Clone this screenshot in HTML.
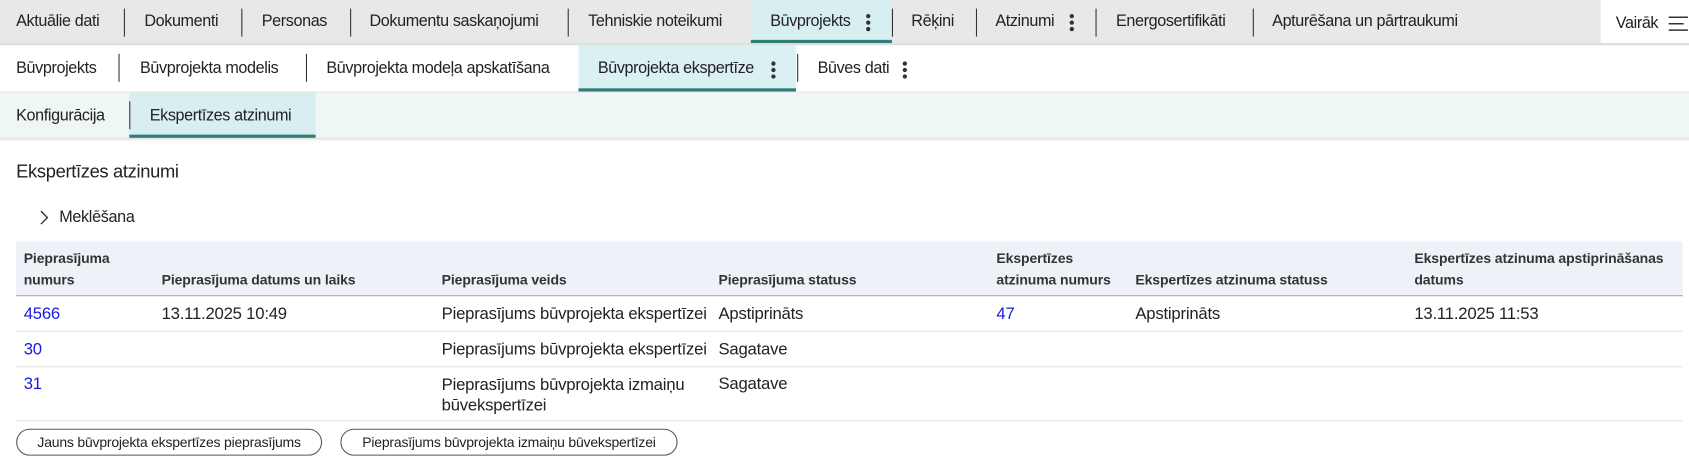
<!DOCTYPE html>
<html><head><meta charset="utf-8"><style>
*{margin:0;padding:0;box-sizing:border-box}
body{width:1689px;height:473px;background:#fff;font-family:"Liberation Sans",sans-serif;color:#222;position:relative;overflow:hidden}
#w{position:absolute;left:0;top:0;width:1568px;height:440px;transform:scale(1.0772);transform-origin:0 0}
.a{position:absolute;white-space:nowrap}
.t{font-size:15px;letter-spacing:-0.35px;color:#222}
.sep{position:absolute;width:1px;background:#333}
.dots{position:absolute;width:4px}
.dots i{display:block;width:4px;height:4px;border-radius:50%;background:#333;margin-bottom:2px}
.h{font-size:13px;font-weight:bold;letter-spacing:-0.1px;line-height:20px;color:#333}
.c{font-size:15.5px;letter-spacing:-0.2px;color:#222}
.l{color:#1a1adc}
.hr{position:absolute;left:15px;width:1547px;height:1px;background:#e4e4e4}
.btn{position:absolute;top:398px;height:25px;border:1px solid #555;border-radius:13px;font-size:13px;letter-spacing:-0.2px;line-height:23px;text-align:center;color:#222}
</style></head><body><div id="w">
<div class="a" style="left:0;top:0;width:1486px;height:40px;background:#e8e8e8"></div>
<div class="a" style="left:697px;top:0;width:131px;height:40px;background:#d8eff1;border-bottom:3px solid #2f7d75"></div>
<div class="a" style="left:0;top:40px;width:1568px;height:2px;background:#ddd"></div>
<div class="a t" style="left:15px;top:11px">Aktuālie dati</div>
<div class="sep" style="left:115px;top:8px;height:26px"></div>
<div class="a t" style="left:134px;top:11px">Dokumenti</div>
<div class="sep" style="left:224px;top:8px;height:26px"></div>
<div class="a t" style="left:243px;top:11px">Personas</div>
<div class="sep" style="left:325px;top:8px;height:26px"></div>
<div class="a t" style="left:343px;top:11px">Dokumentu saskaņojumi</div>
<div class="sep" style="left:527px;top:8px;height:26px"></div>
<div class="a t" style="left:546px;top:11px">Tehniskie noteikumi</div>
<div class="a t" style="left:715px;top:11px">Būvprojekts</div>
<div class="dots" style="left:804px;top:13px"><i></i><i></i><i></i></div>
<div class="sep" style="left:828px;top:8px;height:26px"></div>
<div class="a t" style="left:846px;top:11px">Rēķini</div>
<div class="sep" style="left:906px;top:8px;height:26px"></div>
<div class="a t" style="left:924px;top:11px">Atzinumi</div>
<div class="dots" style="left:993px;top:13px"><i></i><i></i><i></i></div>
<div class="sep" style="left:1017px;top:8px;height:26px"></div>
<div class="a t" style="left:1036px;top:11px">Energosertifikāti</div>
<div class="sep" style="left:1163px;top:8px;height:26px"></div>
<div class="a t" style="left:1181px;top:11px">Apturēšana un pārtraukumi</div>
<div class="a t" style="left:1500px;top:13px">Vairāk</div>
<svg class="a" style="left:1549px;top:14px" width="20" height="16"><path d="M0 2H18M0 8H14M0 14H18" stroke="#333" stroke-width="1.4"/></svg>
<div class="a" style="left:537px;top:42px;width:202px;height:43px;background:#daf0f2;border-bottom:3px solid #2f7d75"></div>
<div class="a t" style="left:15px;top:55px">Būvprojekts</div>
<div class="sep" style="left:110px;top:50px;height:26px"></div>
<div class="a t" style="left:130px;top:55px">Būvprojekta modelis</div>
<div class="sep" style="left:284px;top:50px;height:26px"></div>
<div class="a t" style="left:303px;top:55px">Būvprojekta modeļa apskatīšana</div>
<div class="a t" style="left:555px;top:55px">Būvprojekta ekspertīze</div>
<div class="dots" style="left:716px;top:57px"><i></i><i></i><i></i></div>
<div class="sep" style="left:740px;top:50px;height:26px"></div>
<div class="a t" style="left:759px;top:55px">Būves dati</div>
<div class="dots" style="left:838px;top:57px"><i></i><i></i><i></i></div>
<div class="a" style="left:0;top:85px;width:1568px;height:1px;background:#e2e2e2"></div>
<div class="a" style="left:0;top:86px;width:1568px;height:42px;background:#eef6f6"></div>
<div class="a" style="left:120px;top:86px;width:173px;height:42px;background:#d8eef0;border-bottom:3px solid #2f7d75"></div>
<div class="a t" style="left:15px;top:99px">Konfigurācija</div>
<div class="sep" style="left:120px;top:94px;height:26px"></div>
<div class="a t" style="left:139px;top:99px">Ekspertīzes atzinumi</div>
<div class="a" style="left:0;top:128px;width:1568px;height:3px;background:linear-gradient(#ddd,#fff)"></div>
<div class="a" style="left:15px;top:150px;font-size:17px;letter-spacing:-0.3px;color:#222">Ekspertīzes atzinumi</div>
<svg class="a" style="left:36px;top:195px" width="10" height="14"><path d="M2 1L8 7L2 13" fill="none" stroke="#333" stroke-width="1.3"/></svg>
<div class="a" style="left:55px;top:193px;font-size:15px;letter-spacing:-0.3px">Meklēšana</div>
<div class="a" style="left:15px;top:224px;width:1547px;height:51px;background:#eef2f8;border-bottom:1px solid #aaa"></div>
<div class="a h" style="left:22px;top:230px">Pieprasījuma<br>numurs</div>
<div class="a h" style="left:150px;top:250px">Pieprasījuma datums un laiks</div>
<div class="a h" style="left:410px;top:250px">Pieprasījuma veids</div>
<div class="a h" style="left:667px;top:250px">Pieprasījuma statuss</div>
<div class="a h" style="left:925px;top:230px">Ekspertīzes<br>atzinuma numurs</div>
<div class="a h" style="left:1054px;top:250px">Ekspertīzes atzinuma statuss</div>
<div class="a h" style="left:1313px;top:230px">Ekspertīzes atzinuma apstiprināšanas<br>datums</div>
<div class="a c l" style="left:22px;top:283px">4566</div>
<div class="a c" style="left:150px;top:283px">13.11.2025 10:49</div>
<div class="a c" style="left:410px;top:283px">Pieprasījums būvprojekta ekspertīzei</div>
<div class="a c" style="left:667px;top:283px">Apstiprināts</div>
<div class="a c l" style="left:925px;top:283px">47</div>
<div class="a c" style="left:1054px;top:283px">Apstiprināts</div>
<div class="a c" style="left:1313px;top:283px">13.11.2025 11:53</div>
<div class="hr" style="top:307px"></div>
<div class="a c l" style="left:22px;top:316px">30</div>
<div class="a c" style="left:410px;top:316px">Pieprasījums būvprojekta ekspertīzei</div>
<div class="a c" style="left:667px;top:316px">Sagatave</div>
<div class="hr" style="top:340px"></div>
<div class="a c l" style="left:22px;top:348px">31</div>
<div class="a c" style="left:410px;top:348px;line-height:19px">Pieprasījums būvprojekta izmaiņu<br>būvekspertīzei</div>
<div class="a c" style="left:667px;top:348px">Sagatave</div>
<div class="hr" style="top:390px"></div>
<div class="btn" style="left:15px;width:284px">Jauns būvprojekta ekspertīzes pieprasījums</div>
<div class="btn" style="left:316px;width:313px">Pieprasījums būvprojekta izmaiņu būvekspertīzei</div>
</div></body></html>
